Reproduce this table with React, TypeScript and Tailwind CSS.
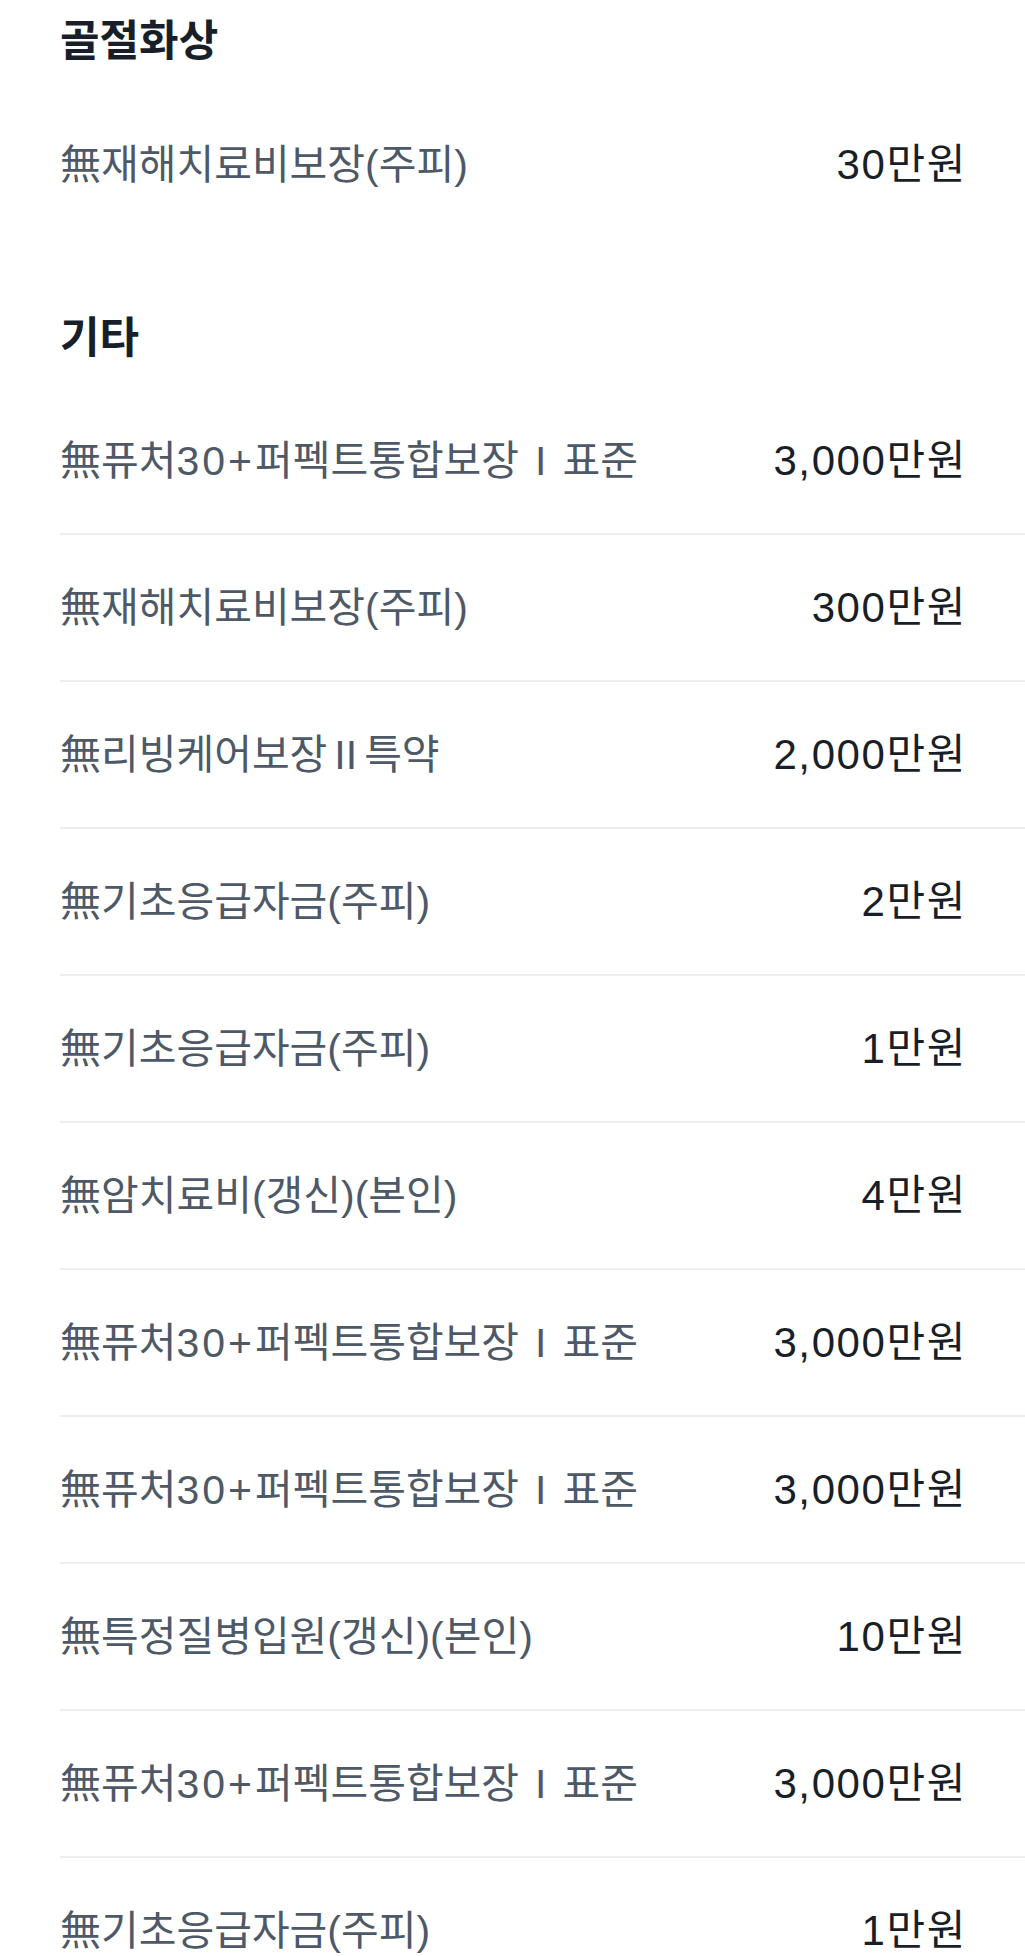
type Item = { label: string; amount: string };

const sections: { title: string; items: Item[]; lastLine?: boolean }[] = [
  {
    title: "골절화상",
    items: [{ label: "無재해치료비보장(주피)", amount: "30만원" }],
  },
  {
    title: "기타",
    lastLine: true,
    items: [
      { label: "無퓨처30+퍼펙트통합보장 I 표준", amount: "3,000만원" },
      { label: "無재해치료비보장(주피)", amount: "300만원" },
      { label: "無리빙케어보장 II 특약", amount: "2,000만원" },
      { label: "無기초응급자금(주피)", amount: "2만원" },
      { label: "無기초응급자금(주피)", amount: "1만원" },
      { label: "無암치료비(갱신)(본인)", amount: "4만원" },
      { label: "無퓨처30+퍼펙트통합보장 I 표준", amount: "3,000만원" },
      { label: "無퓨처30+퍼펙트통합보장 I 표준", amount: "3,000만원" },
      { label: "無특정질병입원(갱신)(본인)", amount: "10만원" },
      { label: "無퓨처30+퍼펙트통합보장 I 표준", amount: "3,000만원" },
      { label: "無기초응급자금(주피)", amount: "1만원" },
    ],
  },
];

// roman numerals get their own gaps, digit runs are spaced a little wider
const Label = ({ text }: { text: string }) => {
  const parts = text.split(/( I | II |[0-9+]+)/).filter(Boolean);
  return (
    <>
      {parts.map((p, i) => {
        if (p === " I ") return <span key={i} className="mx-[16px]">I</span>;
        if (p === " II ") return <span key={i} className="mx-[7px]">II</span>;
        if (/^[0-9+]+$/.test(p)) return <span key={i} className="tracking-[3px]">{p}</span>;
        return <span key={i}>{p}</span>;
      })}
    </>
  );
};

const Row = ({ item, line }: { item: Item; line: boolean }) => {
  return (
    <div
      className={`flex h-[147px] items-center justify-between pr-[58px] ${
        line ? "border-b-2 border-[#eceef0]" : ""
      }`}
    >
      <span className="text-[41px] leading-[50px] text-[#4e5968]">
        <Label text={item.label} />
      </span>
      <span className="text-[42px] leading-[50px] tracking-[1.6px] text-[#191f28]">{item.amount}</span>
    </div>
  );
};

export default function App() {
  return (
    <div
      className="min-h-screen bg-white pl-[60px] pt-[13px] overflow-hidden"
      style={{ fontFamily: '"Liberation Sans", "Noto Sans CJK KR", sans-serif' }}
    >
      {sections.map((s, si) => (
        <section key={si} className={si > 0 ? "mt-[72px]" : ""}>
          <h2
            className="mb-[30px] text-[43px] font-bold leading-[48px] text-[#191f28]"
            style={{ fontFamily: '"Noto Sans CJK KR", sans-serif' }}
          >
            {s.title}
          </h2>
          <div>
            {s.items.map((it, i) => (
              <Row
                key={i}
                item={it}
                line={i < s.items.length - 1 || !!s.lastLine}
              />
            ))}
          </div>
        </section>
      ))}
    </div>
  );
}
